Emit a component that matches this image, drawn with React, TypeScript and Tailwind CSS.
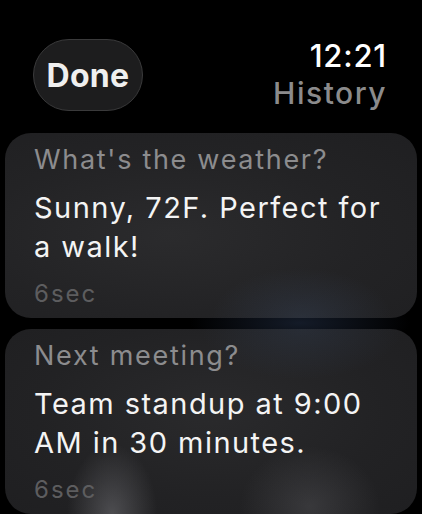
import React from "react";

const cards = [
  {
    q: "What's the weather?",
    a: "Sunny, 72F. Perfect for a walk!",
    t: "6sec",
    bg: "bg-[radial-gradient(ellipse_90px_50px_at_72%_100%,rgba(60,75,100,0.35)_0%,rgba(60,75,100,0)_100%),radial-gradient(ellipse_at_40%_55%,#2b2b2d_0%,#232325_55%,#1f1f21_100%)]",
  },
  {
    q: "Next meeting?",
    a: "Team standup at 9:00 AM in 30 minutes.",
    t: "6sec",
    bg: "bg-[radial-gradient(ellipse_45px_70px_at_26%_100%,rgba(130,130,135,0.45)_0%,rgba(130,130,135,0)_100%),radial-gradient(ellipse_70px_60px_at_74%_96%,rgba(110,110,115,0.3)_0%,rgba(110,110,115,0)_100%),radial-gradient(ellipse_100px_50px_at_72%_0%,rgba(55,70,95,0.3)_0%,rgba(55,70,95,0)_100%),radial-gradient(ellipse_at_50%_45%,#2a2a2c_0%,#222224_60%,#1f1f21_100%)]",
  },
];

export default function App() {
  return (
    <div className="w-[422px] h-[514px] overflow-hidden bg-black bg-[radial-gradient(ellipse_110px_30px_at_300px_323px,#141b28_0%,#000000_100%)] font-['Inter','Noto_Sans',sans-serif] relative">
      <div className="flex justify-between items-start pt-[38px] pl-[33px] pr-[35px]">
        <div className="mt-[1px] h-[72px] w-[110px] rounded-full bg-[#1d1d1e] border-[1.5px] border-[#3a3a3b] flex items-center justify-center">
          <span className="text-[32px] font-bold text-[#efefef] leading-none tracking-[0.3px] mt-[1px]">Done</span>
        </div>
        <div className="flex flex-col items-end">
          <span className="text-[31px] leading-[36px] text-white font-medium tracking-[0.8px]">12:21</span>
          <span className="text-[30px] leading-[36px] mt-[1px] text-[#8b8b8c] font-medium tracking-[1.5px]">History</span>
        </div>
      </div>
      <div className="mt-[22px] px-[5px] flex flex-col gap-[11px]">
        {cards.map((c, i) => (
          <div key={i} className={`rounded-[26px] ${c.bg} pl-[29px] pr-[20px] pt-[11px] pb-[10px]`}>
            <div className="text-[27px] leading-[32px] text-[#8c8c8e] tracking-[1.7px]">{c.q}</div>
            <div className="mt-[12px] text-[29px] leading-[39px] text-[#f4f4f4] tracking-[1.45px]">{c.a}</div>
            <div className="mt-[14px] text-[24px] leading-[28px] text-[#5d5d5f] tracking-[2px]">{c.t}</div>
          </div>
        ))}
      </div>
    </div>
  );
}
